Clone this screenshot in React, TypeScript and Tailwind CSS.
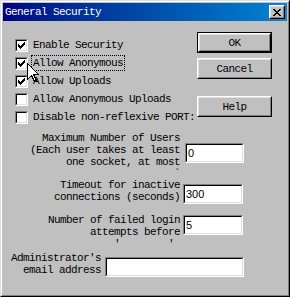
import type { ReactNode } from 'react'

const mono = "font-['Liberation_Mono','Courier_New',monospace] text-[11px] leading-[12px] tracking-[-0.6px]"

function Raised({ children, className = '' }: { children?: ReactNode; className?: string }) {
  return (
    <div className={`border border-t-white border-l-white border-r-black border-b-black ${className}`}>
      <div className="w-full h-full border border-t-[#dfdfdf] border-l-[#dfdfdf] border-r-[#808080] border-b-[#808080] flex items-center justify-center">
        {children}
      </div>
    </div>
  )
}

function Sunken({ children, className = '' }: { children?: ReactNode; className?: string }) {
  return (
    <div className={`border border-t-[#808080] border-l-[#808080] border-r-white border-b-white ${className}`}>
      <div className="w-full h-full border border-t-black border-l-black border-r-[#dfdfdf] border-b-[#dfdfdf] bg-white flex items-center">
        {children}
      </div>
    </div>
  )
}

function CheckMark() {
  const rows: [number, number, number][] = [
    [6, 0, 1], [5, 1, 2], [0, 2, 1], [4, 2, 3], [0, 3, 2], [3, 3, 3], [0, 4, 5], [1, 5, 3], [2, 6, 1],
  ]
  return (
    <svg width="7" height="7" viewBox="0 0 7 7" shapeRendering="crispEdges">
      {rows.map(([x, y, w], i) => (
        <rect key={i} x={x} y={y} width={w} height={1} fill="#000" />
      ))}
    </svg>
  )
}

function Check({ label, checked, focused }: { label: string; checked?: boolean; focused?: boolean }) {
  return (
    <div className="h-[18px] flex items-center">
      <Sunken className="w-[13px] h-[13px] shrink-0">
        <div className="w-full h-full flex items-center justify-center">{checked && <CheckMark />}</div>
      </Sunken>
      <span
        className={`ml-[3px] h-[16px] px-[1px] flex items-center border ${focused ? 'border-dotted border-black' : 'border-transparent'} ${mono} whitespace-pre`}
      >
        {label}
      </span>
    </div>
  )
}

function Field({ value, className }: { value?: string; className: string }) {
  return (
    <Sunken className={`h-[20px] shrink-0 ${className}`}>
      <span className="pl-[1px] font-['Liberation_Sans',Arial,sans-serif] text-[11px] leading-none text-black">{value}</span>
    </Sunken>
  )
}

function Label({ lines, className }: { lines: string[]; className: string }) {
  return (
    <div className={`text-right text-black shrink-0 ${mono} ${className}`}>
      {lines.map((l, i) => (
        <div key={i} className="h-[12px] whitespace-pre">{l}</div>
      ))}
    </div>
  )
}

function CloseX() {
  const px: [number, number, number][] = [
    [0, 0, 2], [6, 0, 2], [1, 1, 2], [5, 1, 2], [2, 2, 4], [3, 3, 2], [2, 4, 4], [1, 5, 2], [5, 5, 2], [0, 6, 2], [6, 6, 2],
  ]
  return (
    <svg width="8" height="7" viewBox="0 0 8 7" shapeRendering="crispEdges">
      {px.map(([x, y, w], i) => (
        <rect key={i} x={x} y={y} width={w} height={1} fill="#000" />
      ))}
    </svg>
  )
}

function Cursor() {
  return (
    <svg className="absolute left-[26px] top-[62px]" width="13" height="20" viewBox="0 0 13 20" shapeRendering="crispEdges">
      <path d="M0.5 0.5 L0.5 16.5 L4.5 12.5 L7.5 18.5 L9.5 17.5 L6.5 11.5 L11.5 11.5 Z" fill="#fff" stroke="#000" strokeWidth="1" />
    </svg>
  )
}

export default function App() {
  return (
    <div className="relative w-[290px] h-[297px] border border-t-[#dfdfdf] border-l-[#dfdfdf] border-r-black border-b-black">
      <div className="w-full h-full border border-t-white border-l-white border-r-[#808080] border-b-[#808080] bg-[#c0c0c0] p-[1px] flex flex-col">
        <div className="h-[18px] shrink-0 flex items-center justify-between pl-[2px] pr-[2px] bg-linear-to-r from-[#000080] to-[#1084d0]">
          <span className={`text-white ${mono}`}>General Security</span>
          <Raised className="w-[16px] h-[14px] bg-[#c0c0c0]">
            <CloseX />
          </Raised>
        </div>

        <div className="flex">
          <div className="w-[194px] pl-[12px] pt-[15px] flex flex-col">
            <Check label="Enable Security" checked />
            <Check label="Allow Anonymous" checked focused />
            <Check label="Allow Uploads" checked />
            <Check label="Allow Anonymous Uploads" />
            <Check label="Disable non-reflexive PORT:" />
          </div>
          <div className="w-[75px] pt-[11px] flex flex-col">
            <div className="h-[21px] border border-black">
              <Raised className="w-full h-full">
                <span className={mono}>OK</span>
              </Raised>
            </div>
            <Raised className="mt-[5px] h-[21px]">
              <span className={mono}>Cancel</span>
            </Raised>
            <Raised className="mt-[17px] h-[21px]">
              <span className={mono}>Help</span>
            </Raised>
          </div>
        </div>

        <div className="flex flex-col mt-[6px]">
          <div className="h-[47px] flex items-start">
            <Label
              className="w-[177px]"
              lines={['Maximum Number of Users', '(Each user takes at least', 'one socket, at most', '`']}
            />
            <Field value="0" className="ml-[5px] mt-[11px] w-[59px]" />
          </div>
          <div className="h-[35px] flex items-start">
            <Label className="w-[177px]" lines={['Timeout for inactive', 'connections (seconds)']} />
            <Field value="300" className="ml-[3px] mt-[5px] w-[60px]" />
          </div>
          <div className="h-[38px] flex items-start">
            <Label
              className="w-[177px]"
              lines={['Number of failed login', 'attempts before', " '        ' "]}
            />
            <Field value="5" className="ml-[3px] mt-[1px] w-[60px]" />
          </div>
          <div className="flex items-start">
            <Label className="w-[98px]" lines={["Administrator's", 'email address']} />
            <Field className="ml-[4px] mt-[5px] w-[139px]" />
          </div>
        </div>
      </div>
      <Cursor />
    </div>
  )
}
